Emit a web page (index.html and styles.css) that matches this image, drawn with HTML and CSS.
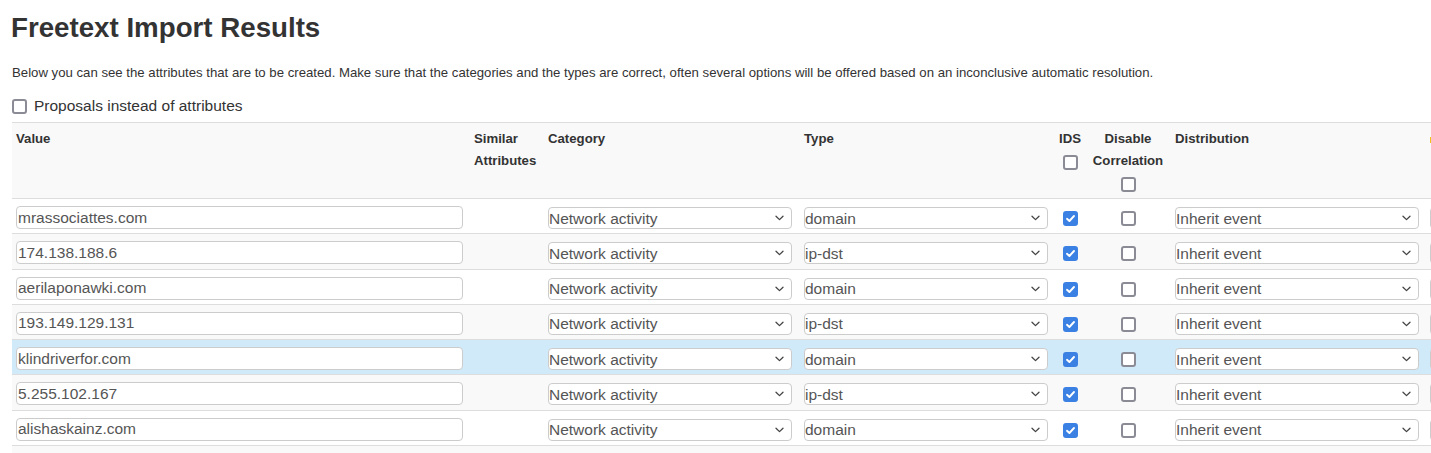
FILE: index.html
```html
<!DOCTYPE html>
<html>
<head>
<meta charset="utf-8">
<link rel="stylesheet" href="styles.css">
</head>
<body>
<div class="page">
  <h2 class="title">Freetext Import Results</h2>
  <p class="intro">Below you can see the attributes that are to be created. Make sure that the categories and the types are correct, often several options will be offered based on an inconclusive automatic resolution.</p>
  <label class="proposals"><input type="checkbox" class="cb"> Proposals instead of attributes</label>
  <table class="results">
    <colgroup>
      <col class="c-value"><col class="c-similar"><col class="c-cat"><col class="c-type"><col class="c-ids"><col class="c-corr"><col class="c-dist"><col class="c-more">
    </colgroup>
    <tbody>
      <tr class="head">
        <th>Value</th>
        <th>Similar Attributes</th>
        <th>Category</th>
        <th>Type</th>
        <th class="center">IDS<br><input type="checkbox" class="cb"></th>
        <th class="center">Disable Correlation<br><input type="checkbox" class="cb"></th>
        <th>Distribution</th>
        <th><span class="mark"></span></th>
      </tr>
      <tr>
        <td><input class="val" type="text" value="mrassociattes.com"></td><td></td>
        <td><select class="sel"><option>Network activity</option></select></td>
        <td><select class="sel"><option>domain</option></select></td>
        <td class="center"><input type="checkbox" class="cb" checked></td>
        <td class="center"><input type="checkbox" class="cb"></td>
        <td><select class="sel"><option>Inherit event</option></select></td>
        <td><select class="sel"><option></option></select></td>
      </tr>
      <tr>
        <td><input class="val" type="text" value="174.138.188.6"></td><td></td>
        <td><select class="sel"><option>Network activity</option></select></td>
        <td><select class="sel"><option>ip-dst</option></select></td>
        <td class="center"><input type="checkbox" class="cb" checked></td>
        <td class="center"><input type="checkbox" class="cb"></td>
        <td><select class="sel"><option>Inherit event</option></select></td>
        <td><select class="sel"><option></option></select></td>
      </tr>
      <tr>
        <td><input class="val" type="text" value="aerilaponawki.com"></td><td></td>
        <td><select class="sel"><option>Network activity</option></select></td>
        <td><select class="sel"><option>domain</option></select></td>
        <td class="center"><input type="checkbox" class="cb" checked></td>
        <td class="center"><input type="checkbox" class="cb"></td>
        <td><select class="sel"><option>Inherit event</option></select></td>
        <td><select class="sel"><option></option></select></td>
      </tr>
      <tr>
        <td><input class="val" type="text" value="193.149.129.131"></td><td></td>
        <td><select class="sel"><option>Network activity</option></select></td>
        <td><select class="sel"><option>ip-dst</option></select></td>
        <td class="center"><input type="checkbox" class="cb" checked></td>
        <td class="center"><input type="checkbox" class="cb"></td>
        <td><select class="sel"><option>Inherit event</option></select></td>
        <td><select class="sel"><option></option></select></td>
      </tr>
      <tr class="hover">
        <td><input class="val" type="text" value="klindriverfor.com"></td><td></td>
        <td><select class="sel"><option>Network activity</option></select></td>
        <td><select class="sel"><option>domain</option></select></td>
        <td class="center"><input type="checkbox" class="cb" checked></td>
        <td class="center"><input type="checkbox" class="cb"></td>
        <td><select class="sel"><option>Inherit event</option></select></td>
        <td><select class="sel"><option></option></select></td>
      </tr>
      <tr>
        <td><input class="val" type="text" value="5.255.102.167"></td><td></td>
        <td><select class="sel"><option>Network activity</option></select></td>
        <td><select class="sel"><option>ip-dst</option></select></td>
        <td class="center"><input type="checkbox" class="cb" checked></td>
        <td class="center"><input type="checkbox" class="cb"></td>
        <td><select class="sel"><option>Inherit event</option></select></td>
        <td><select class="sel"><option></option></select></td>
      </tr>
      <tr>
        <td><input class="val" type="text" value="alishaskainz.com"></td><td></td>
        <td><select class="sel"><option>Network activity</option></select></td>
        <td><select class="sel"><option>domain</option></select></td>
        <td class="center"><input type="checkbox" class="cb" checked></td>
        <td class="center"><input type="checkbox" class="cb"></td>
        <td><select class="sel"><option>Inherit event</option></select></td>
        <td><select class="sel"><option></option></select></td>
      </tr>
      <tr>
        <td><input class="val" type="text" value=""></td><td></td>
        <td><select class="sel"><option>Network activity</option></select></td>
        <td><select class="sel"><option>domain</option></select></td>
        <td class="center"><input type="checkbox" class="cb" checked></td>
        <td class="center"><input type="checkbox" class="cb"></td>
        <td><select class="sel"><option>Inherit event</option></select></td>
        <td><select class="sel"><option></option></select></td>
      </tr>
    </tbody>
  </table>
</div>
</body>
</html>
```
FILE: styles.css
```css
html, body {
  margin: 0;
  padding: 0;
  background: #ffffff;
  overflow: hidden;
}
body {
  font-family: "Liberation Sans", Arial, sans-serif;
  color: #333333;
  width: 1431px;
  height: 453px;
}
.page {
  padding: 0 0 0 12px;
  width: 1700px;
}
.title {
  margin: 0;
  padding-top: 12px;
  font-size: 27.7px;
  line-height: 32px;
  font-weight: bold;
  color: #333333;
  margin-left: -1px;
}
.intro {
  margin: 21px 0 0 0;
  font-size: 13.2px;
  line-height: 16px;
}
.proposals {
  display: flex;
  align-items: center;
  gap: 7px;
  margin-top: 15px;
  font-size: 15.5px;
  line-height: 20px;
  color: #333;
}
.cb {
  -webkit-appearance: none;
  appearance: none;
  box-sizing: border-box;
  width: 15px;
  height: 15px;
  margin: 0;
  border: 2px solid #8b8b96;
  border-radius: 3px;
  background: #ffffff;
  vertical-align: middle;
  display: inline-block;
}
.cb:checked {
  border-color: #3b80e3;
  background-color: #3b80e3;
  background-image: url("data:image/svg+xml;utf8,<svg xmlns='http://www.w3.org/2000/svg' width='11' height='11' viewBox='0 0 11 11'><path d='M2 5.8 L4.4 8 L9 3' fill='none' stroke='white' stroke-width='1.9' stroke-linecap='round' stroke-linejoin='round'/></svg>");
  background-repeat: no-repeat;
  background-position: center;
}
.results {
  margin-top: 6px;
  border-collapse: collapse;
  table-layout: fixed;
  width: 1614px;
  font-size: 13.2px;
}
.c-value { width: 458px; }
.c-similar { width: 74px; }
.c-cat { width: 256px; }
.c-type { width: 255px; }
.c-ids { width: 30px; }
.c-corr { width: 86px; }
.c-dist { width: 255px; }
.c-more { width: 200px; }
.results th, .results td {
  border-top: 1px solid #dddddd;
  text-align: left;
  vertical-align: top;
  overflow: hidden;
}
.results td {
  padding: 7px 4px 4.3px 4px;
  height: 23px;
}
.results th {
  font-weight: bold;
  line-height: 22px;
  padding: 5px 4px 4px 4px;
}
.results tr.head th,
.results tbody tr:nth-child(odd) td {
  background: #f9f9f9;
}
.results tr.hover td {
  background: #d0eafa !important;
}
.results .center {
  text-align: center;
  padding-left: 0;
  padding-right: 0;
}
th .cb { margin-top: 2px; }
td .cb { margin-top: 5px; }
.mark {
  display: inline-block;
  width: 3px;
  height: 6px;
  background: #f0c419;
  margin-top: 9px;
}
.val {
  box-sizing: border-box;
  width: 447px;
  height: 23px;
  border: 1px solid #cccccc;
  border-radius: 4px;
  padding: 0 1px;
  font-family: "Liberation Sans", Arial, sans-serif;
  font-size: 15.5px;
  color: #555555;
  background: #ffffff;
  display: block;
  outline: none;
}
.sel {
  -webkit-appearance: none;
  appearance: none;
  box-sizing: border-box;
  width: 244px;
  height: 22px;
  margin-top: 1px;
  border: 1px solid #cccccc;
  border-radius: 4px;
  padding: 0 20px 0 0;
  font-family: "Liberation Sans", Arial, sans-serif;
  font-size: 15.5px;
  color: #555555;
  background-color: #ffffff;
  background-image: url("data:image/svg+xml;utf8,<svg xmlns='http://www.w3.org/2000/svg' width='9' height='6' viewBox='0 0 9 6'><path d='M1 1.2 L4.5 4.6 L8 1.2' fill='none' stroke='%23444' stroke-width='1.3' stroke-linecap='round' stroke-linejoin='round'/></svg>");
  background-repeat: no-repeat;
  background-position: right 7px center;
  display: block;
}
```
